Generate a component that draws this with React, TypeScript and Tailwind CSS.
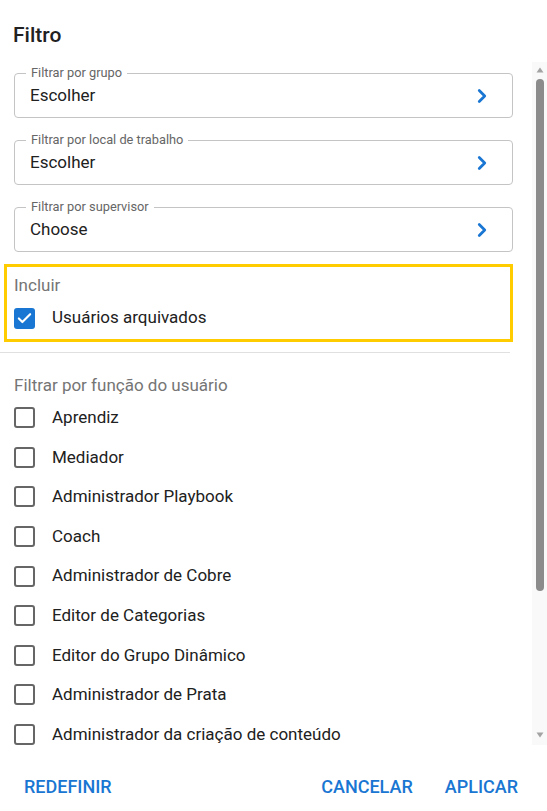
import { Check, ChevronRight } from "lucide-react";

const ROLES = [
  "Aprendiz",
  "Mediador",
  "Administrador Playbook",
  "Coach",
  "Administrador de Cobre",
  "Editor de Categorias",
  "Editor do Grupo Dinâmico",
  "Administrador de Prata",
  "Administrador da criação de conteúdo",
];

function PickerField({ label, value }: { label: string; value: string }) {
  return (
    <div className="relative h-[45px] rounded-[4px] border border-[#c4c4c4] flex items-center pl-[15px] pr-[19px]">
      {/* notched label */}
      <span className="absolute -top-[9px] left-[11px] px-[5px] bg-white text-[12.8px] leading-[16px] text-[#666666]">
        {label}
      </span>
      <span className="flex-1 text-[17px] text-[#212121]">{value}</span>
      <ChevronRight size={22} strokeWidth={3} className="text-[#1976d2]" />
    </div>
  );
}

function Box({ checked }: { checked?: boolean }) {
  if (checked) {
    return (
      <span className="w-[21px] h-[21px] rounded-[3px] bg-[#1976d2] flex items-center justify-center shrink-0">
        <Check size={17} strokeWidth={3} className="text-white" />
      </span>
    );
  }
  return <span className="w-[21px] h-[21px] rounded-[3px] border-[2.5px] border-[#666666] shrink-0" />;
}

function ScrollBar() {
  return (
    <div className="w-[15px] shrink-0 bg-[#f9f9f9] flex flex-col items-center pl-[1px] pt-[5px] pb-[7px]">
      <svg width="8" height="6" viewBox="0 0 8 6">
        <path d="M4 0.5 L7.5 5.5 H0.5 Z" fill="#a3a3a3" />
      </svg>
      <div className="mt-[6px] h-[512px] w-[8px] rounded-full bg-[#8b8b8b]" />
      <div className="flex-1" />
      <svg width="8" height="6" viewBox="0 0 8 6">
        <path d="M0.5 0.5 H7.5 L4 5.5 Z" fill="#a3a3a3" />
      </svg>
    </div>
  );
}

export default function App() {
  return (
    <div className="w-[547px] h-[811px] bg-white flex flex-col font-['Roboto',sans-serif] text-[#212121]">
      <div className="h-[62px] shrink-0 pl-[13px] pt-[21px]">
        <h2 className="text-[21px] font-medium leading-[28px]">Filtro</h2>
      </div>

      <div className="flex-1 min-h-0 flex">
        <div className="flex-1 min-w-0 overflow-hidden">
          <div className="pl-[14px] pr-[19px] pt-[11px]">
            <div className="flex flex-col gap-[22px]">
              <PickerField label="Filtrar por grupo" value="Escolher" />
              <PickerField label="Filtrar por local de trabalho" value="Escolher" />
              <PickerField label="Filtrar por supervisor" value="Choose" />
            </div>

            <div className="mt-[12px] -ml-[10px] border-[3px] border-[#ffcc00] pl-[7px] pt-[6px] pb-[6px]">
              <p className="text-[17px] leading-[24px] text-[#757575]">Incluir</p>
              <label className="flex items-center gap-[17px] h-[30px] mt-[6px]">
                <Box checked />
                <span className="text-[17px]">Usuários arquivados</span>
              </label>
            </div>

            <div className="-ml-[14px] mr-[3px] mt-[10px] border-t border-[#e0e0e0]" />

            <p className="mt-[20px] text-[17px] leading-[24px] text-[#757575]">Filtrar por função do usuário</p>
            <div className="mt-[1px] flex flex-col">
              {ROLES.map((r) => (
                <label key={r} className="flex items-center gap-[17px] h-[39.6px]">
                  <Box />
                  <span className="text-[17px]">{r}</span>
                </label>
              ))}
            </div>
          </div>
        </div>
        <ScrollBar />
      </div>

      <div className="h-[66px] shrink-0 flex items-start pt-[23px] pl-[16px] pr-[21px]">
        <button className="px-[8px] h-[36px] text-[18px] font-medium text-[#1976d2]">REDEFINIR</button>
        <div className="flex-1" />
        <button className="px-[8px] h-[36px] text-[18px] font-medium text-[#1976d2]">CANCELAR</button>
        <button className="ml-[16px] px-[8px] h-[36px] text-[18px] font-medium text-[#1976d2]">APLICAR</button>
      </div>
    </div>
  );
}
